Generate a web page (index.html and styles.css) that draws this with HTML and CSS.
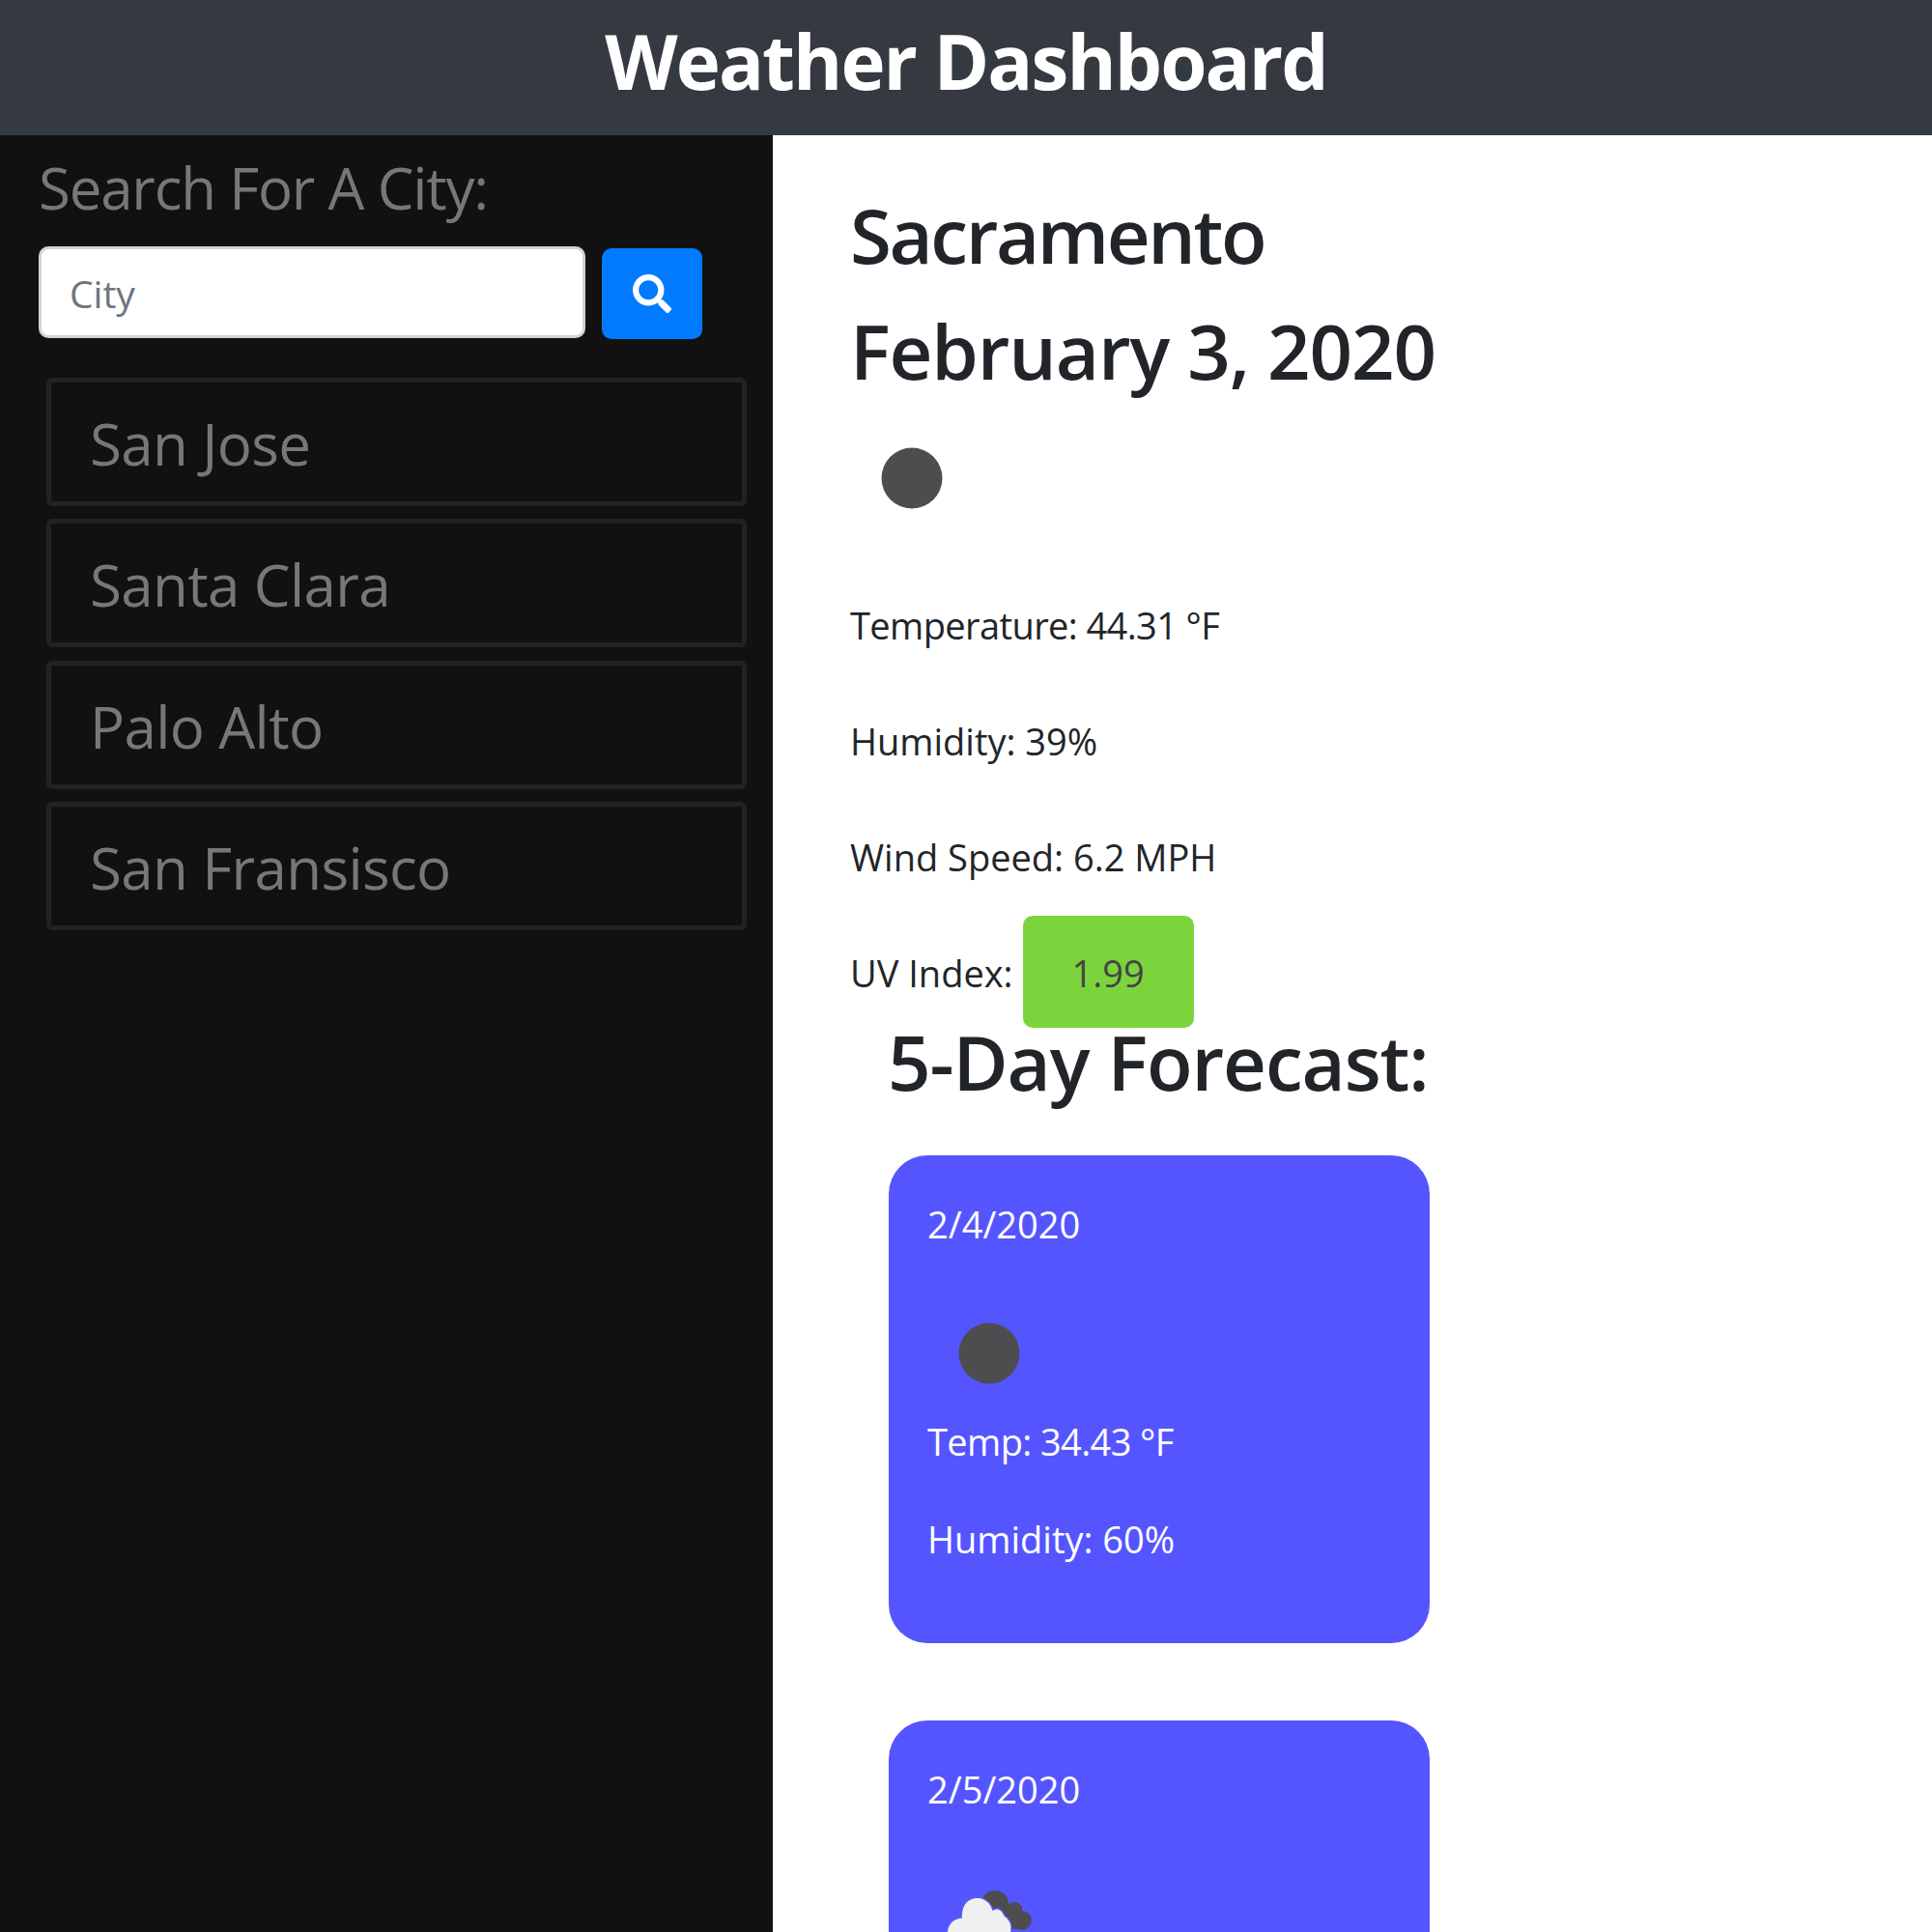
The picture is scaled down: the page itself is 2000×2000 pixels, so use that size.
FILE: index.html
```html
<!DOCTYPE html>
<html lang="en">
<head>
<meta charset="UTF-8">
<meta name="viewport" content="width=device-width, initial-scale=1.0">
<title>Weather Dashboard</title>
<link rel="stylesheet" href="styles.css">
</head>
<body>

<header class="topbar">
    <h1>Weather Dashboard</h1>
</header>

<div class="page">
    <aside class="sidebar">
        <h4 class="search-title">Search For A City:</h4>
        <form class="search-form">
            <input type="text" class="search-input" placeholder="City">
            <button type="button" class="search-btn">
                <svg class="search-icon" viewBox="0 0 512 512"><path fill="#fff" d="M505 442.7L405.3 343c-4.5-4.5-10.6-7-17-7H372c27.6-35.3 44-79.7 44-128C416 93.1 322.9 0 208 0S0 93.1 0 208s93.1 208 208 208c48.3 0 92.7-16.4 128-44v16.3c0 6.4 2.5 12.5 7 17l99.7 99.7c9.4 9.4 24.6 9.4 33.9 0l28.3-28.3c9.4-9.4 9.4-24.6.1-34zM208 336c-70.7 0-128-57.2-128-128 0-70.7 57.2-128 128-128 70.7 0 128 57.2 128 128 0 70.7-57.2 128-128 128z"/></svg>
            </button>
        </form>
        <ul class="city-list">
            <li>San Jose</li>
            <li>Santa Clara</li>
            <li>Palo Alto</li>
            <li>San Fransisco</li>
        </ul>
    </aside>

    <main class="content">
        <h2 class="city-name">Sacramento</h2>
        <h2>February 3, 2020</h2>
        <svg class="weather-icon today" viewBox="0 0 125 125"><circle cx="64" cy="63" r="31.5" fill="#4d4d4f"/></svg>
        <p class="tight">Temperature: 44.31 °F</p>
        <p>Humidity: 39%</p>
        <p>Wind Speed: 6.2 MPH</p>
        <p class="uv-row">UV Index: <span class="uv-badge">1.99</span></p>

        <section class="forecast">
            <h2>5-Day Forecast:</h2>
            <div class="day-card">
                <p>2/4/2020</p>
                <svg class="weather-icon" viewBox="0 0 125 125"><circle cx="64" cy="63" r="31.5" fill="#4d4d4f"/></svg>
                <p class="tight">Temp: 34.43 °F</p>
                <p>Humidity: 60%</p>
            </div>
            <div class="day-card">
                <p>2/5/2020</p>
                <svg class="weather-icon" viewBox="0 0 125 125">
                    <g fill="#4d4d4f">
                        <circle cx="70" cy="48" r="14"/>
                        <circle cx="90" cy="54" r="8"/>
                        <circle cx="98" cy="65" r="10"/>
                        <rect x="68" y="50" width="30" height="24"/>
                    </g>
                    <path fill="#f0f0f0" stroke="#5a5af0" stroke-width="1.5" d="M20 98 V78 Q21 64 35 62 Q35 42 52 41 Q64 42 68 54 Q76 50 80 60 Q88 66 87 74 V98 Z"/>
                </svg>
            </div>
        </section>
    </main>
</div>

</body>
</html>
```

FILE: styles.css
```css
html, body {
    height: 100%;
    margin: 0;
    overflow: hidden;
}

body {
    font-family: "Open Sans", "Noto Sans", sans-serif;
    font-size: 38px;
    line-height: 60px;
    color: #212529;
    background-color: #fff;
}

.topbar {
    height: 140px;
    box-sizing: border-box;
    padding-bottom: 13px;
    display: flex;
    justify-content: center;
    align-items: center;
    background-color: #343a40;
    color: #fff;
}

.topbar h1 {
    margin: 0;
    font-size: 78px;
    font-weight: 700;
    line-height: 125px;
    letter-spacing: -1.9px;
}

.page {
    display: flex;
    height: 1860px;
}

.sidebar {
    width: 800px;
    flex-shrink: 0;
    box-sizing: border-box;
    padding: 17px 27px 0 40px;
    background-color: #111;
    color: #777;
}

.search-title {
    margin: 0 0 23px;
    font-size: 60px;
    font-weight: 400;
    line-height: 75px;
    letter-spacing: -1.2px;
}

.search-form {
    display: flex;
    align-items: flex-start;
    gap: 16px;
}

.search-input {
    width: 566px;
    height: 95px;
    box-sizing: border-box;
    padding: 2px 29px 0;
    border: 3px solid #ced4da;
    border-radius: 10px;
    font-family: inherit;
    font-size: 39px;
    outline: none;
}

.search-input::placeholder {
    color: #6c757d;
}

.search-btn {
    display: flex;
    justify-content: center;
    align-items: center;
    width: 104px;
    height: 94px;
    margin-top: 2px;
    margin-left: 1px;
    padding: 0;
    border: none;
    border-radius: 10px;
    background-color: #007bff;
}

.search-icon {
    width: 40px;
    height: 40px;
}

.city-list {
    list-style: none;
    margin: 40px 0 0 8px;
    padding: 0;
}

.city-list li {
    height: 133px;
    box-sizing: border-box;
    margin-bottom: 13.25px;
    padding: 26px 40px;
    border: 5px solid #222;
    border-radius: 6px;
    font-size: 60px;
    font-weight: 400;
    line-height: 75px;
    letter-spacing: -0.6px;
}

.content {
    flex: 1;
    padding: 55px 0 0 80px;
}

h2 {
    margin: 0 0 24px;
    font-size: 78px;
    font-weight: 600;
    line-height: 96px;
    letter-spacing: -1.1px;
}

h2.city-name {
    letter-spacing: -2.4px;
}

.weather-icon {
    display: block;
    width: 125px;
    height: 125px;
}

.weather-icon.today {
    margin-top: -3px;
    margin-bottom: 60px;
}

.content p {
    margin: 0 0 60px;
}

.content p.tight {
    letter-spacing: -0.6px;
}

.content p.uv-row {
    display: flex;
    align-items: center;
    gap: 10px;
    height: 60px;
    margin-bottom: 14px;
}

.uv-badge {
    display: flex;
    justify-content: center;
    align-items: center;
    width: 177px;
    height: 116px;
    margin-top: -2px;
    padding-top: 2px;
    box-sizing: border-box;
    border-radius: 10px;
    background-color: #7cd43c;
    color: #444;
}

.forecast {
    width: 560px;
    margin-left: 40px;
}

.forecast h2 {
    margin: 0 0 49px -1px;
    white-space: nowrap;
}

.day-card {
    box-sizing: border-box;
    height: 505px;
    margin-bottom: 80px;
    padding: 41px 40px 40px;
    border-radius: 40px;
    background-color: #55f;
    color: #fff;
}

.day-card .weather-icon {
    margin-bottom: -1px;
}

.content .day-card p {
    margin: 0 0 41px;
}
```
